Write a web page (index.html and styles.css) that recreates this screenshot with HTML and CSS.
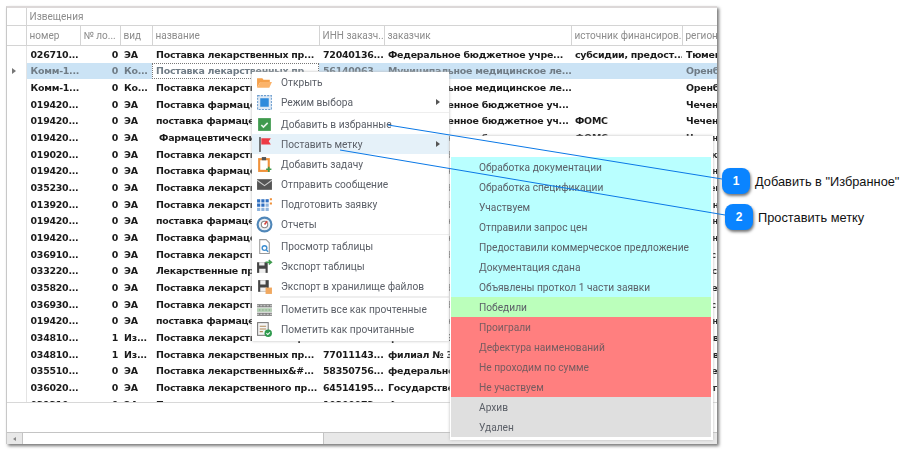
FILE: index.html

```html
<!DOCTYPE html>
<html lang="ru">
<head>
  <meta charset="UTF-8" />
  <title>Извещения</title>
  <link rel="stylesheet" href="styles.css">
</head>
<body>
  <div class="window">
    <div class="grid-area">
      <table class="grid">
        <colgroup>
          <col class="c-head"><col class="c-num"><col class="c-lot"><col class="c-kind"><col class="c-name">
          <col class="c-inn"><col class="c-cust"><col class="c-src"><col class="c-reg">
        </colgroup>
        <thead>
          <tr class="group-row"><th></th><th colspan="8">Извещения</th></tr>
          <tr class="head-row">
            <th></th><th>номер</th><th>№ ло...</th><th>вид</th><th>название</th>
            <th>ИНН заказч...</th><th>заказчик</th><th>источник финансиров...</th><th>регион</th>
          </tr>
        </thead>
        <tbody>
          <tr><td></td><td>026710...</td><td class="r">0</td><td>ЭА</td><td>Поставка лекарственных пр...</td><td>72040136...</td><td>Федеральное бюджетное учре...</td><td>субсидии, предост...</td><td>Тюмен</td></tr>
          <tr class="sel"><td class="mark"><span class="arrow"></span></td><td>Комм-1...</td><td class="r">0</td><td>Ко...</td><td class="focus">Поставка лекарственных пр...</td><td>56140063</td><td>Муниципальное медицинское ле...</td><td></td><td>Оренб</td></tr>
          <tr><td></td><td>Комм-1...</td><td class="r">0</td><td>Ко...</td><td>Поставка лекарственных пр...</td><td>56140063</td><td>Муниципальное медицинское ле...</td><td></td><td>Оренб</td></tr>
          <tr><td></td><td>019420...</td><td class="r">0</td><td>ЭА</td><td>Поставка фармацевтических...</td><td>20160018...</td><td>Государственное бюджетное уч...</td><td></td><td>Чечен</td></tr>
          <tr><td></td><td>019420...</td><td class="r">0</td><td>ЭА</td><td>поставка фармацевтических...</td><td>20160018...</td><td>Государственное бюджетное уч...</td><td>ФОМС</td><td>Чечен</td></tr>
          <tr><td></td><td>019420...</td><td class="r">0</td><td>ЭА</td><td>&nbsp;Фармацевтические средства</td><td>20160018...</td><td>Государственное бюджетное уч...</td><td>ФОМС</td><td>Чечен</td></tr>
          <tr><td></td><td>019020...</td><td class="r">0</td><td>ЭА</td><td>Поставка лекарственных пр...</td><td>70190270...</td><td>Областное бюджетное учрежде...</td><td></td><td>Томск</td></tr>
          <tr><td></td><td>019420...</td><td class="r">0</td><td>ЭА</td><td>Поставка фармацевтических...</td><td>20160018...</td><td>Государственное бюджетное уч...</td><td></td><td>Чечен</td></tr>
          <tr><td></td><td>035230...</td><td class="r">0</td><td>ЭА</td><td>Поставка лекарственных пр...</td><td>52300136...</td><td>Областное бюджетное учрежде...</td><td></td><td>Нижег</td></tr>
          <tr><td></td><td>013920...</td><td class="r">0</td><td>ЭА</td><td>Поставка лекарственных пр...</td><td>39060142...</td><td>Областное бюджетное учрежде...</td><td></td><td>Калин</td></tr>
          <tr><td></td><td>019420...</td><td class="r">0</td><td>ЭА</td><td>поставка фармацевтических...</td><td>20160018...</td><td>Государственное бюджетное уч...</td><td></td><td>Чечен</td></tr>
          <tr><td></td><td>019420...</td><td class="r">0</td><td>ЭА</td><td>Поставка фармацевтических...</td><td>20160018...</td><td>Государственное бюджетное уч...</td><td></td><td>Чечен</td></tr>
          <tr><td></td><td>036910...</td><td class="r">0</td><td>ЭА</td><td>Поставка лекарственных пр...</td><td>69010032...</td><td>Областное бюджетное учрежде...</td><td></td><td>Тверс</td></tr>
          <tr><td></td><td>033220...</td><td class="r">0</td><td>ЭА</td><td>Лекарственные препараты</td><td>32010041...</td><td>Областное бюджетное учрежде...</td><td></td><td>Брянс</td></tr>
          <tr><td></td><td>035820...</td><td class="r">0</td><td>ЭА</td><td>Поставка лекарственных пр...</td><td>58350756...</td><td>Областное бюджетное учрежде...</td><td></td><td>Пензе</td></tr>
          <tr><td></td><td>036930...</td><td class="r">0</td><td>ЭА</td><td>Поставка лекарственных пр...</td><td>69010032...</td><td>Областное бюджетное учрежде...</td><td></td><td>Тверс</td></tr>
          <tr><td></td><td>019420...</td><td class="r">0</td><td>ЭА</td><td>поставка фармацевтических...</td><td>20160018...</td><td>Государственное бюджетное уч...</td><td></td><td>Чечен</td></tr>
          <tr><td></td><td>034810...</td><td class="r">1</td><td>Из...</td><td>Поставка лекарственных пр...</td><td>77011143...</td><td>филиал № 3 федерального...</td><td></td><td>Москв</td></tr>
          <tr><td></td><td>034810...</td><td class="r">1</td><td>Из...</td><td>Поставка лекарственных пр...</td><td>77011143...</td><td>филиал № 3 федерального...</td><td></td><td>Москв</td></tr>
          <tr><td></td><td>035510...</td><td class="r">0</td><td>ЭА</td><td>Поставка лекарственных&amp;#...</td><td>58350756...</td><td>федеральное бюджетное уч...</td><td></td><td>Пензе</td></tr>
          <tr><td></td><td>036020...</td><td class="r">0</td><td>ЭА</td><td>Поставка лекарственного пр...</td><td>64514195...</td><td>Государственное бюджетное...</td><td></td><td>Сарат</td></tr>
          <tr><td></td><td>031210...</td><td class="r">0</td><td>ЭА</td><td>Поставка лекарственных пр...</td><td>10200073...</td><td>Федеральное бюджетное...</td><td></td><td>Карел</td></tr>
        </tbody>
      </table>
    </div>
    <div class="footer"></div>
    <div class="hscroll">
      <div class="scroll-btn"><span class="scroll-arrow"></span></div>
      <div class="scroll-thumb"></div>
    </div>
  </div>

  <div class="menu">
    <div class="item"><span class="ic"><svg viewBox="0 0 16 16"><path d="M1 4h5l1 1.500h6v2H4L1 13z" fill="#f5a04a"/><path d="M4 7.500h11L12.500 13H1z" fill="#fbb36a"/></svg></span>Открыть</div>
    <div class="item has-sub"><span class="ic"><svg viewBox="0 0 16 16"><rect x="1.500" y="1.500" width="13" height="13" fill="#dfeaf5" stroke="#6f9fd0" stroke-dasharray="2 1"/><rect x="4" y="4" width="8" height="8" fill="#2f8bdc"/></svg></span>Режим выбора</div>
    <div class="sep"></div>
    <div class="item"><span class="ic"><svg viewBox="0 0 16 16"><rect x="2" y="2" width="12" height="12" fill="#3f9a4e"/><path d="M5 8.500l2 2 4-4" fill="none" stroke="#e8f5ea" stroke-width="1.500"/></svg></span>Добавить в избранные</div>
    <div class="item hover has-sub"><span class="ic"><svg viewBox="0 0 16 16"><rect x="3" y="1" width="1.500" height="14" fill="#5a5a5a"/><path d="M5 2h9l-2 3 2 3H5z" fill="#ee3b45"/></svg></span>Поставить метку</div>
    <div class="item"><span class="ic"><svg viewBox="0 0 16 16"><rect x="3" y="3" width="9" height="11" fill="none" stroke="#f0913a" stroke-width="2"/><rect x="5.500" y="1" width="4" height="3" fill="#555"/><path d="M12 10v5M9.500 12.500h5" stroke="#3f9a4e" stroke-width="1.500"/></svg></span>Добавить задачу</div>
    <div class="item"><span class="ic"><svg viewBox="0 0 16 16"><rect x="1" y="3" width="14" height="10" fill="#555"/><path d="M1 4l7 5 7-5" fill="none" stroke="#ccc"/></svg></span>Отправить сообщение</div>
    <div class="item"><span class="ic"><svg viewBox="0 0 16 16"><path d="M1 3h3v3H1zM5 3h3v3H5zM1 7h3v3H1zM5 7h3v3H5z" fill="#2f6fc0"/><path d="M9 7h3v3H9zM1 11h3v3H1zM5 11h3v3H5zM9 11h3v3H9z" fill="#8fb4dc"/><path d="M9 3h3v3H9z" fill="#2f6fc0"/><path d="M13 2h2v2h-2zM13 6h2v2h-2z" fill="#f0913a"/></svg></span>Подготовить заявку</div>
    <div class="item"><span class="ic"><svg viewBox="0 0 16 16"><circle cx="8" cy="8" r="6.500" fill="#e9eef3" stroke="#4f86b8" stroke-width="2"/><circle cx="8" cy="8" r="3" fill="#fff" stroke="#888"/><path d="M8 8l2.500-3" stroke="#d8453e" stroke-width="1.500"/></svg></span>Отчеты</div>
    <div class="sep"></div>
    <div class="item"><span class="ic"><svg viewBox="0 0 16 16"><path d="M3.500 1.500h6l3 3v10h-9z" fill="#fff" stroke="#9a9a9a"/><circle cx="8" cy="9.500" r="2.200" fill="none" stroke="#3f8fd0" stroke-width="1.300"/><path d="M9.500 11l2 2" stroke="#3f8fd0" stroke-width="1.300"/></svg></span>Просмотр таблицы</div>
    <div class="item"><span class="ic"><svg viewBox="0 0 16 16"><path d="M1 4h10v10H1z" fill="#444"/><path d="M3 4h5v3H3zM3 10h6v4H3z" fill="#eee"/><path d="M9 4h5M12 2l2.500 2L12 6" fill="none" stroke="#3f9a4e" stroke-width="1.400"/></svg></span>Экспорт таблицы</div>
    <div class="item"><span class="ic"><svg viewBox="0 0 16 16"><path d="M2 2h10v11H2z" fill="#444"/><path d="M4 2h5v4H4zM4 9h6v4H4z" fill="#eee"/><rect x="9" y="9" width="6" height="6" fill="#f0a860"/></svg></span>Экспорт в хранилище файлов</div>
    <div class="sep sep-wide"></div>
    <div class="item"><span class="ic"><svg viewBox="0 0 16 16"><path d="M1 3h14v3H1z" fill="#7a7a7a"/><path d="M1 7h14v3H1z" fill="#8fb98f"/><path d="M1 11h14v3H1z" fill="#7a7a7a"/><path d="M1 8.500h14M1 4.500h14M1 12.500h14" stroke="#ddd" stroke-dasharray="2 1"/></svg></span>Пометить все как прочтенные</div>
    <div class="item"><span class="ic"><svg viewBox="0 0 16 16"><rect x="1.500" y="1.500" width="10" height="12" fill="#f4f4f4" stroke="#7a7a7a"/><path d="M3.500 5h6M3.500 7.500h6M3.500 10h3" stroke="#b08a5a"/><circle cx="11.500" cy="11.500" r="3.500" fill="#2f9a4e"/><path d="M9.800 11.500l1.300 1.300 2-2" fill="none" stroke="#fff"/></svg></span>Пометить как прочитанные</div>
  </div>

  <div class="submenu">
    <div class="tag"></div>
    <div class="tag cyan">Обработка документации</div>
    <div class="tag cyan">Обработка спецификации</div>
    <div class="tag cyan">Участвуем</div>
    <div class="tag cyan">Отправили запрос цен</div>
    <div class="tag cyan">Предоставили коммерческое предложение</div>
    <div class="tag cyan">Документация сдана</div>
    <div class="tag cyan">Объявлены проткол 1 части заявки</div>
    <div class="tag green">Победили</div>
    <div class="tag red">Проиграли</div>
    <div class="tag red">Дефектура наименований</div>
    <div class="tag red">Не проходим по сумме</div>
    <div class="tag red">Не участвуем</div>
    <div class="tag grey">Архив</div>
    <div class="tag grey">Удален</div>
  </div>

  <svg class="leaders" width="916" height="453">
    <path d="M388 125L722 179" />
    <path d="M340 150L725 215" />
  </svg>

  <div class="callout c1"><span class="badge">1</span><span class="note">Добавить в "Избранное"</span></div>
  <div class="callout c2"><span class="badge">2</span><span class="note">Проставить метку</span></div>
</body>
</html>
```

FILE: styles.css

```css
html, body {
  margin: 0;
  padding: 0;
  background: #fff;
  overflow: hidden;
}

body {
  width: 916px;
  height: 453px;
  position: relative;
  font-family: Roboto, sans-serif;
}

.window {
  margin: 6px 0 0 6px;
  width: 711px;
  height: 438px;
  box-sizing: border-box;
  border: 1px solid #c8c8c8;
  border-top: 2px solid #dcd8d8;
  border-right: 0;
  border-bottom: 0;
  background: #fff;
  box-shadow: 2px 2px 3px #777;
  display: flex;
  flex-direction: column;
  filter: blur(0.35px);
}

.grid-area {
  height: 394px;
  overflow: hidden;
  border-bottom: 1px solid #d8d8d8;
}

.grid {
  border-collapse: collapse;
  table-layout: fixed;
  width: 710px;
}

.c-head { width: 19px; }
.c-num { width: 54px; }
.c-lot { width: 40px; }
.c-kind { width: 32px; }
.c-name { width: 167px; }
.c-inn { width: 65px; }
.c-cust { width: 187px; }
.c-src { width: 111px; }
.c-reg { width: 35px; }

.grid th {
  font: 400 10px Roboto, sans-serif;
  color: #8c8c8c;
  text-align: left;
  padding: 0 3px;
  border-left: 1px solid #d4d4d4;
  border-bottom: 1px solid #d4d4d4;
  white-space: nowrap;
  overflow: hidden;
}

.grid th:first-child { border-left: 0; }
.group-row th { height: 17px; }
.head-row th { height: 19px; }

.grid td {
  font: 700 9.45px "DejaVu Sans", sans-serif;
  letter-spacing: -0.25px;
  color: #1a1a1a;
  height: 16.67px;
  padding: 0 2px 0 4px;
  white-space: nowrap;
  overflow: hidden;
}

.grid td:first-child { border-right: 1px solid #e4e4e4; }
.grid td.r { text-align: right; padding-right: 2px; }

.grid .sel td { background: #cbe3f5; color: #6f7b85; }
.grid .sel td.mark { background: #fff; padding-left: 5px; }
.grid .sel td.focus { background: #fff; outline: 1px dotted #777; outline-offset: -1px; }

.arrow {
  display: block;
  width: 0;
  height: 0;
  border-left: 4px solid #777;
  border-top: 3px solid transparent;
  border-bottom: 3px solid transparent;
}

.footer { flex: 1; }

.hscroll {
  height: 11px;
  display: flex;
  background: #e8e8e8;
  border-top: 1px solid #c4c4c4;
}

.scroll-btn {
  width: 15px;
  display: flex;
  align-items: center;
  justify-content: center;
}

.scroll-arrow {
  width: 0;
  height: 0;
  border-right: 3px solid #888;
  border-top: 2px solid transparent;
  border-bottom: 2px solid transparent;
}

.scroll-thumb {
  width: 300px;
  background: #fff;
  border-left: 1px solid #c4c4c4;
  border-right: 1px solid #c4c4c4;
}

/* context menu */
.menu {
  position: absolute;
  left: 252px;
  top: 72px;
  width: 197px;
  height: 269px;
  background: #fff;
  box-shadow: 0 0 3px #bbb;
  font-size: 10.2px;
  color: #5c6068;
  filter: blur(0.3px);
}

.item {
  height: 20px;
  display: flex;
  align-items: center;
  position: relative;
  white-space: nowrap;
}

.item.hover { background: #e5f1f9; }

.ic {
  width: 29px;
  padding-left: 4px;
  box-sizing: border-box;
  display: flex;
}

.ic svg { width: 17px; height: 17px; }

.has-sub::after {
  content: "";
  position: absolute;
  right: 9px;
  top: 7px;
  border-left: 4px solid #555;
  border-top: 3px solid transparent;
  border-bottom: 3px solid transparent;
}

.sep {
  height: 1px;
  margin: 0 0 1px 28px;
  background: #eee;
}

.sep-wide { height: 2px; margin-bottom: 1px; }

/* tags submenu */
.submenu {
  position: absolute;
  left: 450px;
  top: 136px;
  width: 263px;
  height: 304px;
  box-sizing: border-box;
  padding: 1px 2px 3px 1px;
  background: #fff;
  box-shadow: 0 0 3px #bbb;
  font-size: 10.2px;
  color: #5c6068;
  filter: blur(0.3px);
}

.tag {
  height: 20px;
  line-height: 21px;
  padding-left: 28px;
  white-space: nowrap;
}

.cyan { background: #b9ffff; }
.green { background: #bbffbb; }
.red { background: #ff7f7f; color: #775c60; }
.grey { background: #dfdfdf; }

/* callouts */
.leaders {
  position: absolute;
  left: 0;
  top: 0;
  pointer-events: none;
}

.leaders path {
  fill: none;
  stroke: #0a78e6;
  stroke-width: 1;
}

.callout {
  position: absolute;
  display: flex;
  align-items: center;
  gap: 5px;
}

.c1 { left: 722px; top: 168px; }
.c2 { left: 725px; top: 204px; }

.badge {
  width: 28px;
  height: 26px;
  border-radius: 8px;
  background: #0a84ff;
  color: #fff;
  font: 700 12px "Liberation Sans", sans-serif;
  display: flex;
  align-items: center;
  justify-content: center;
  box-shadow: 1px 2px 3px #777;
}

.note {
  font: 12.8px "Liberation Sans", sans-serif;
  color: #111;
  white-space: nowrap;
}
```
